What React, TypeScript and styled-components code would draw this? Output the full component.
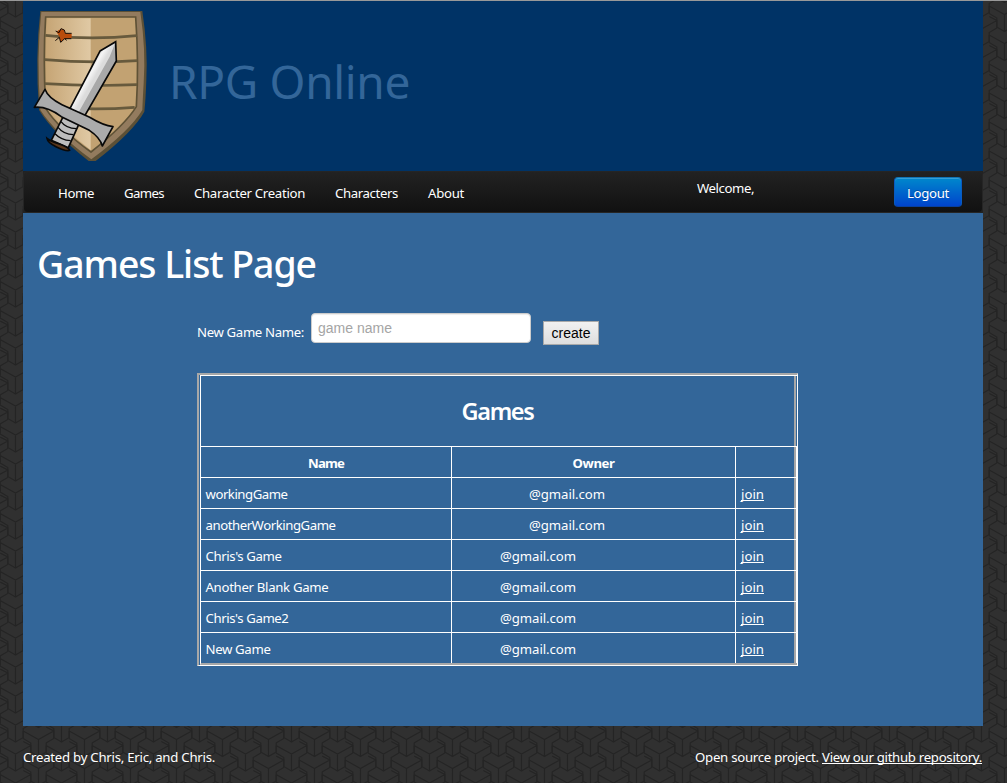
import React, { useLayoutEffect, useRef, useState } from "react";
import styled, { createGlobalStyle } from "styled-components";

const tile = encodeURIComponent(
  `<svg xmlns="http://www.w3.org/2000/svg" width="46" height="29"><defs><g id="y" fill="none" stroke="#242424" stroke-width="1.3"><path d="M-15.3 -8.5L0 0L15.3 -8.5M0 0V17M-15.3 -8.5V-1L-7.7 3.5V12.5L0 17L7.7 12.5V3.5L15.3 -1V-8.5L7.7 -12.5"/></g></defs><rect width="46" height="29" fill="#303030"/><use href="#y" x="15.5" y="0"/><use href="#y" x="15.5" y="29"/><use href="#y" x="38.5" y="14.5"/><use href="#y" x="38.5" y="-14.5"/><use href="#y" x="-7.5" y="14.5"/><use href="#y" x="-7.5" y="-14.5"/><use href="#y" x="61.5" y="0"/><use href="#y" x="61.5" y="29"/></svg>`
);

const Global = createGlobalStyle`
  *, *::before, *::after { box-sizing: border-box; }
  html { background: #303030 url("data:image/svg+xml,${tile}"); }
  body {
    margin: 0;
    height: 783px;
    overflow: hidden;
    color: #fff;
    font: 13.2px/20px "Noto Sans", "Open Sans", sans-serif;
  }
`;

const Page = styled.div`
  height: 783px;
  border-top: 1px solid #999;
  padding: 0 24px 0 23px;
`;

const Header = styled.header`
  display: flex;
  height: 170px;
  padding: 9px 0 0 10px;
  background: #003366;
`;

const SiteTitle = styled.div`
  margin: 39px 0 0 21px;
  color: #336699;
  font-size: 46px;
  line-height: 64px;
`;

const Nav = styled.nav`
  display: flex;
  height: 42px;
  padding: 0 20px 0 19px;
  border: 1px solid #252525;
  border-radius: 4px;
  background: linear-gradient(#222, #111);
`;

const NavBack = styled.div`
  background: #222;
`;

const NavLink = styled.a`
  padding: 11px 15px 0;
  color: #fff;
`;

const Welcome = styled.span`
  margin: 6px 0 0 auto;
`;

const Logout = styled.button`
  width: 68px;
  height: 30px;
  margin: 5px 0 0 140px;
  padding: 1px 0 0;
  border: 1px solid #0a5fb8;
  border-color: #1274b4 #0a5bc0 #0840a0;
  border-radius: 4px;
  background: linear-gradient(#0088cc, #0044cc);
  box-shadow: inset 0 1px 0 rgba(255, 255, 255, 0.2);
  color: #fff;
  font: inherit;
  text-shadow: 0 -1px 0 rgba(0, 0, 0, 0.25);
`;

const Main = styled.main`
  height: 513px;
  padding: 31px 15px 0;
  background: #336699;
`;

const PageTitle = styled.h1`
  margin: 0 0 0 -1px;
  font-size: 37.4px;
  font-weight: 500;
  line-height: 40px;
`;

const Form = styled.form`
  display: flex;
  height: 60px;
  margin: 29px 0 0 159px;
`;

const Label = styled.label`
  width: 114px;
  padding-top: 9px;
`;

const GameInput = styled.input`
  width: 220px;
  height: 30px;
  padding: 4px 6px;
  border: 1px solid #ccc;
  border-radius: 4px;
  background: #fff;
  box-shadow: inset 0 1px 1px rgba(0, 0, 0, 0.075);
  font: 14px/20px "Liberation Sans", sans-serif;
  &::placeholder { color: #a5a5a5; opacity: 1; }
`;

const Create = styled.button`
  width: 56px;
  height: 24px;
  margin: 8px 0 0 12px;
  padding: 0;
  border: 1px solid #a9a9a9;
  background: linear-gradient(#f1f1f1, #dedede);
  color: #000;
  font: 14px/20px "Liberation Sans", sans-serif;
`;

const Frame = styled.div`
  width: 601px;
  height: 293px;
  margin-left: 159px;
  padding-left: 1px;
  border: solid;
  border-width: 2px 1px 1px 2px;
  border-color: #a8a8a8 #fff #fff #a8a8a8;
`;

const Table = styled.div`
  height: 290px;
  border: solid;
  border-width: 1px 0 2px 1px;
  border-color: #fff #fff #a8a8a8 #fff;
`;

const Row = styled.div<{ $tall?: boolean }>`
  display: grid;
  grid-template-columns: ${(p) => (p.$tall ? "593px" : "251px 284px 58px")} 2px 1px;
  height: ${(p) => (p.$tall ? 71 : 31)}px;
  border-bottom: 1px solid #fff;
  &:last-child { height: 30px; border-bottom: 0; }
`;

const Cell = styled.div<{ $indent?: number; $last?: boolean }>`
  padding: 6px 0 0 ${(p) => p.$indent ?? 4.5}px;
  border-right: ${(p) => (p.$last ? "0" : "1px solid #fff")};
`;

const HeadCell = styled(Cell)`
  padding-left: 0;
  text-align: center;
  font-weight: 700;
`;

const TitleCell = styled.h2`
  margin: 0;
  padding-top: 15px;
  text-align: center;
  font-size: 23.5px;
  font-weight: 600;
  line-height: 40px;
`;

const Edge = styled.i`
  background: #a8a8a8;
`;

const EdgeLine = styled.i`
  background: #fff;
`;

const Footer = styled.footer`
  display: flex;
  justify-content: space-between;
  margin-right: 1px;
  padding-top: 21px;
`;

const Tracked = styled.span`
  display: inline-block;
  white-space: pre;
`;

const Link = styled.a`
  color: #fff;
  ${Tracked} {
    text-decoration: underline;
    text-decoration-thickness: 1px;
    text-underline-offset: 1px;
    text-decoration-skip-ink: none;
  }
`;

/** Text whose tracking is adjusted so that it fills the given width. */
function Fit({ w, children }: { w: number; children: string }) {
  const ref = useRef<HTMLSpanElement>(null);
  const [spacing, setSpacing] = useState(0);
  useLayoutEffect(() => {
    const natural = ref.current!.getBoundingClientRect().width;
    setSpacing((w - natural) / children.length);
  }, [w, children]);
  return (
    <Tracked ref={ref} style={{ letterSpacing: spacing }}>
      {children}
    </Tracked>
  );
}

function Emblem() {
  return (
    <svg width="115" height="152" viewBox="99 30 345 456">
      <defs>
        <linearGradient id="shine" x1="0" x2="1">
          <stop offset="0" stopColor="#c6a575" />
          <stop offset="1" stopColor="#e0c9a4" />
        </linearGradient>
        <linearGradient id="blade" gradientUnits="userSpaceOnUse" x1="250" y1="210" x2="285" y2="230">
          <stop offset="0" stopColor="#b5b5b5" />
          <stop offset="0.6" stopColor="#f5f5f5" />
          <stop offset="1" stopColor="#dcdcdc" />
        </linearGradient>
      </defs>
      <path d="M121 33H427Q444 145 439 240Q437 300 433 335Q400 395 287 483H266Q160 400 117 330Q105 170 121 33Z" fill="#5c5036" />
      <path d="M124 36H421Q438 150 431 250Q428 300 427 330Q390 392 274 478Q165 398 121 330Q109 170 124 36Z" fill="#937b5e" />
      <path d="M137 51H407Q417 190 409 320Q375 375 273 456Q175 385 137 325Q129 170 137 51Z" fill="#c2a272" stroke="#5f5236" strokeWidth="5" />
      <path d="M142 55H272V450Q180 380 141 325Q134 180 142 55Z" fill="url(#shine)" />
      <g fill="none" stroke="#675a3d" strokeWidth="8">
        <path d="M136 106Q270 121 411 107M134 179Q270 191 412 182M134 251Q270 260 411 254M134 319Q270 333 404 322" />
      </g>
      <path d="M176 90L190 87L195 99L215 101V114L194 116L181 127L179 111L170 97Z" fill="#b84c0c" />
      <path d="M167 93L177 98L183 86L193 90L196 100H215M166 122L178 112L182 127L194 116L200 121M194 116H214" fill="none" stroke="#160b04" strokeWidth="3" />
      <path d="M191 347L154 421L205 443L239 367Z" fill="#bdbdbd" stroke="#090909" strokeWidth="5" />
      <path d="M183 365Q198 385 229 386M174 382Q191 403 220 404M165 401Q183 420 212 422" fill="none" stroke="#090909" strokeWidth="4" />
      <path d="M141 415Q143 428 168 440Q199 455 209 451Q207 443 180 433Q150 423 141 415Z" fill="#59371b" stroke="#090909" strokeWidth="5" />
      <path d="M300 153L347 125L349 183L254 348L209 327Z" fill="url(#blade)" />
      <path d="M347 125L349 183L254 348L235 338L329 170Z" fill="#a9a9a9" />
      <path d="M300 153L347 125L349 183L254 348L209 327Z" fill="none" stroke="#090909" strokeWidth="5" />
      <path d="M135 268Q144 294 186 314L269 352Q310 377 339 380L307 438Q300 412 268 391L184 350Q141 318 103 322Z" fill="#ababab" stroke="#090909" strokeWidth="5" strokeLinejoin="round" />
    </svg>
  );
}

const links: [string, number][] = [
  ["Home", 36],
  ["Games", 40],
  ["Character Creation", 111],
  ["Characters", 63],
  ["About", 36],
];

const games: [string, number, number][] = [
  ["workingGame", 82, 77],
  ["anotherWorkingGame", 130, 77],
  ["Chris's Game", 76, 48],
  ["Another Blank Game", 123, 48],
  ["Chris's Game2", 83, 48],
  ["New Game", 65, 48],
];

export default function App() {
  return (
    <Page>
      <Global />
      <Header>
        <Emblem />
        <SiteTitle><Fit w={241}>RPG Online</Fit></SiteTitle>
      </Header>
      <NavBack>
        <Nav>
          {links.map(([name, w]) => (
            <NavLink key={name}><Fit w={w}>{name}</Fit></NavLink>
          ))}
          <Welcome><Fit w={57}>Welcome,</Fit></Welcome>
          <Logout><Fit w={42}>Logout</Fit></Logout>
        </Nav>
      </NavBack>
      <Main>
        <PageTitle><Fit w={279}>Games List Page</Fit></PageTitle>
        <Form>
          <Label><Fit w={107}>New Game Name:</Fit></Label>
          <GameInput placeholder="game name" />
          <Create type="button">create</Create>
        </Form>
        <Frame>
          <Table>
            <Row $tall>
              <TitleCell><Fit w={72}>Games</Fit></TitleCell>
              <Edge />
            </Row>
            <Row>
              <HeadCell><Fit w={36}>Name</Fit></HeadCell>
              <HeadCell><Fit w={42}>Owner</Fit></HeadCell>
              <HeadCell $last />
              <Edge />
              <EdgeLine />
            </Row>
            {games.map(([name, w, indent]) => (
              <Row key={name}>
                <Cell><Fit w={w}>{name}</Fit></Cell>
                <Cell $indent={indent}><Fit w={76}>@gmail.com</Fit></Cell>
                <Cell $last $indent={5}><Link><Fit w={23}>join</Fit></Link></Cell>
                <Edge />
                <EdgeLine />
              </Row>
            ))}
          </Table>
        </Frame>
      </Main>
      <Footer>
        <Fit w={192}>Created by Chris, Eric, and Chris.</Fit>
        <span>
          <Fit w={127}>Open source project. </Fit>
          <Link><Fit w={160}>View our github repository.</Fit></Link>
        </span>
      </Footer>
    </Page>
  );
}
